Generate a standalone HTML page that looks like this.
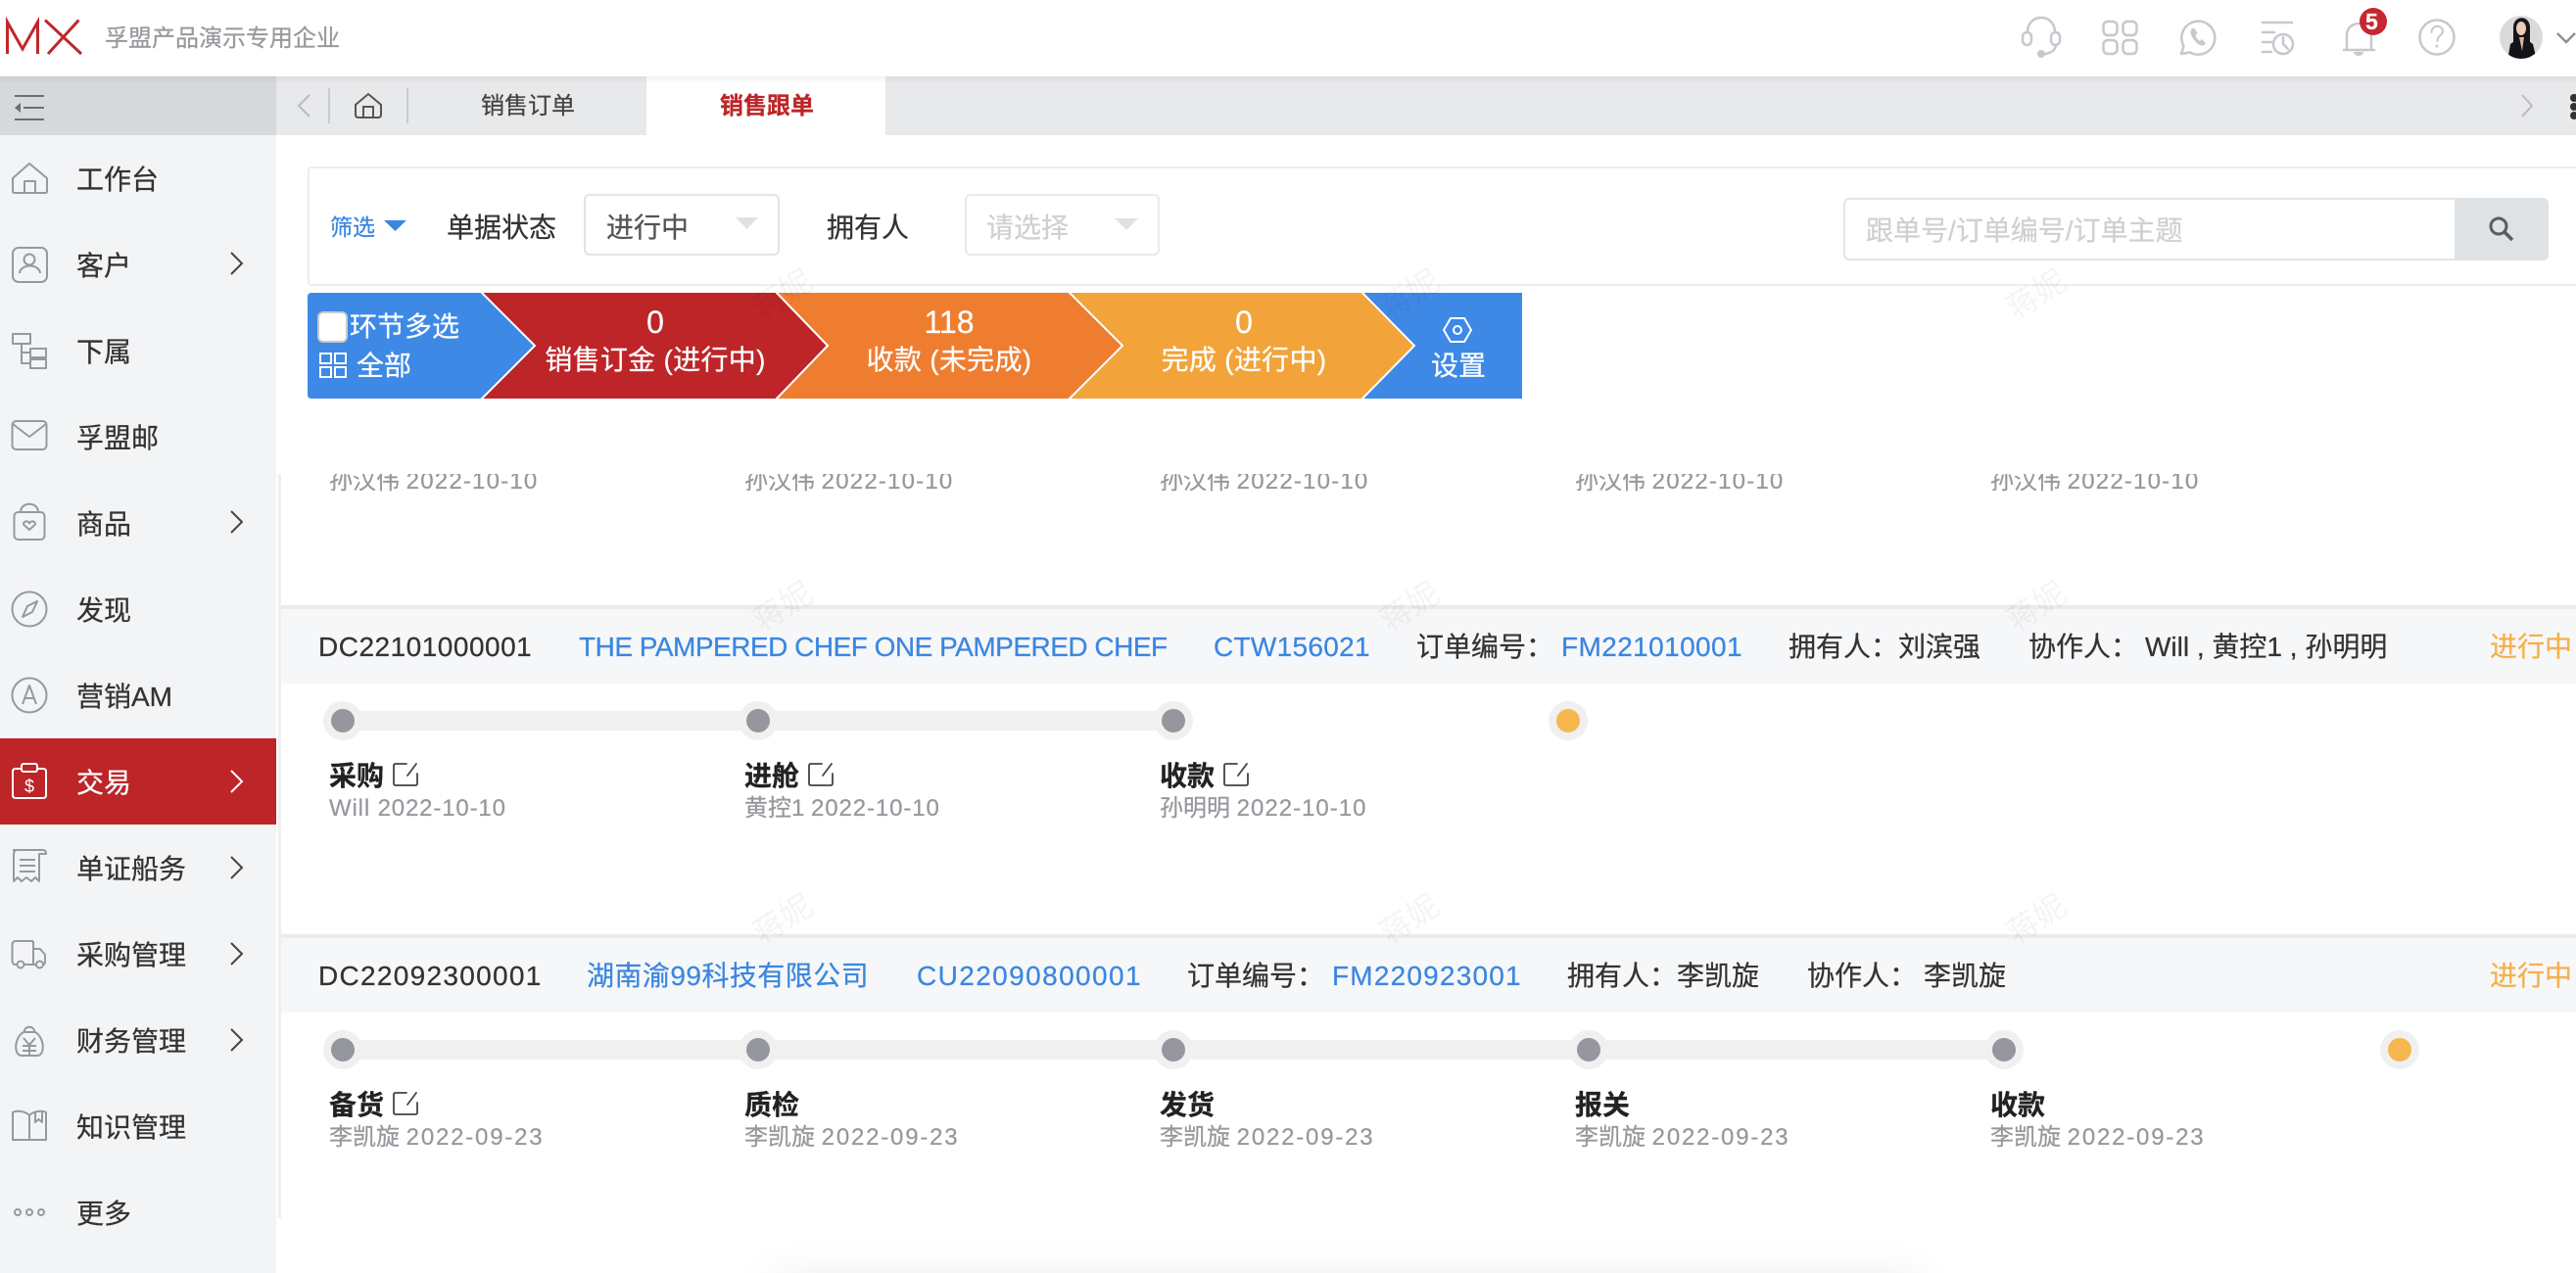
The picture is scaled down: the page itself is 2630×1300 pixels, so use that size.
<!DOCTYPE html>
<html lang="zh-CN"><head><meta charset="utf-8"><title>销售跟单</title>
<style>
html,body{margin:0;padding:0;width:2630px;height:1300px;overflow:hidden;background:#fff}
body{position:relative;font-family:"Liberation Sans","Noto Sans CJK SC",sans-serif;color:#333}
.b{position:absolute}
.t{position:absolute;white-space:nowrap;line-height:40px;height:40px;font-size:28px;z-index:5;-webkit-text-stroke:.25px currentColor}
.s{font-size:24px;color:#97989d}
.h{font-weight:700;color:#222}
.c{transform:translateX(-50%);color:#fff}
.bl{color:#3b87e0}
.o{color:#f5b04c}
.wm{position:absolute;font-size:32px;color:rgba(0,0,0,.045);transform:translate(-50%,-50%) rotate(-32deg);z-index:6;white-space:nowrap}
svg{position:absolute;left:0;top:0;z-index:4}
</style></head><body>
<!-- backgrounds -->
<div class="b" style="left:0;top:138px;width:282px;height:1162px;background:#f3f4f6"></div>
<div class="b" style="left:0;top:78px;width:282px;height:60px;background:#d6d8da"></div>
<div class="b" style="left:282px;top:78px;width:2348px;height:60px;background:#e8e9eb"></div>
<div class="b" style="left:660px;top:78px;width:244px;height:60px;background:#fff"></div>
<div class="b" style="left:0;top:78px;width:2630px;height:8px;background:linear-gradient(rgba(0,0,0,.05),rgba(0,0,0,0))"></div>
<div class="b" style="left:0;top:754px;width:282px;height:88px;background:#bd2528"></div>
<div class="b" style="left:284px;top:484px;width:3px;height:760px;background:#efefef"></div>
<div class="b" style="left:314px;top:170px;width:2330px;height:118px;border:2px solid #eceded;border-radius:4px"></div>
<div class="b" style="left:287px;top:618px;width:2343px;height:4px;background:#ebebec"></div>
<div class="b" style="left:287px;top:622px;width:2343px;height:76px;background:#f6f7f9"></div>
<div class="b" style="left:287px;top:954px;width:2343px;height:4px;background:#ebebec"></div>
<div class="b" style="left:287px;top:958px;width:2343px;height:76px;background:#f6f7f9"></div>
<div class="b" style="left:596px;top:198px;width:196px;height:59px;border:2px solid #e2e4e6;border-radius:6px"></div>
<div class="b" style="left:985px;top:198px;width:195px;height:59px;border:2px solid #e8eaeb;border-radius:6px"></div>
<div class="b" style="left:1882px;top:202px;height:60px;border:2px solid #e4e5e7;border-radius:6px;box-sizing:content-box;width:716px"></div>
<div class="b" style="left:2506px;top:202px;width:96px;height:64px;background:#dfe2e5;border-radius:0 6px 6px 0"></div>
<div class="b" style="left:800px;top:1316px;width:1150px;height:20px;box-shadow:0 0 44px 12px rgba(0,0,0,.08)"></div>
<!-- bars -->
<div class="b" style="left:350px;top:726px;width:848px;height:20px;background:#f0f0f0"></div>
<div class="b" style="left:350px;top:1062px;width:1696px;height:20px;background:#f0f0f0"></div>

<svg width="2630" height="1300" viewBox="0 0 2630 1300" fill="none">
<!-- logo -->
<path d="M7.500 55V22.500L23 50 38.500 22.500V55M46 20.500 83 55M80.500 20.500 49 55" stroke="#c0272d" stroke-width="3"/>
<!-- header icons -->
<g stroke="#c6c8cd" stroke-width="2.500" stroke-linecap="round" stroke-linejoin="round">
<path d="M2070 33C2070 13 2098 13 2098 33"/>
<rect x="2065" y="33" width="9" height="13" rx="4.500"/><rect x="2094" y="33" width="9" height="13" rx="4.500"/>
<path d="M2099 46C2098 52 2094 54 2088 55"/>
<rect x="2147.500" y="22" width="14" height="14" rx="4.500"/><rect x="2167.500" y="22" width="14" height="14" rx="4.500"/>
<rect x="2147.500" y="41" width="14" height="14" rx="4.500"/><rect x="2167.500" y="41" width="14" height="14" rx="4.500"/>
<path d="M2227 55L2229.500 47A17 17 0 1 1 2236 53.500Z"/>
<path d="M2310 23H2340M2310 33H2322M2310 43H2319M2310 53H2319"/>
<circle cx="2331" cy="45" r="10"/><path d="M2331 38V45L2336 50"/>
<path d="M2393 51H2424M2396 51V36C2396 20 2421 20 2421 36V51"/>
<circle cx="2488" cy="38" r="17.500"/>
<path d="M2482.500 33C2482.500 25 2494 25 2494 32C2494 36 2488.500 36 2488.500 42" stroke-width="2"/>
</g>
<circle cx="2084" cy="55" r="4" fill="#c6c8cd"/>
<path d="M2238 29C2236 31 2236 35 2239 39C2242 44 2246 47 2250 46.500L2252 44L2248 40L2246 42C2244 41 2242 38 2241.500 36L2243.500 34L2240.500 29Z" fill="#c6c8cd"/>
<path d="M2403 53h10a5 4 0 0 1-10 0Z" fill="#c6c8cd"/>
<circle cx="2488" cy="47" r="1.500" fill="#c6c8cd"/>
<circle cx="2423" cy="22" r="14" fill="#c6282f"/>
<path d="M2611 34L2620 43 2629 34" stroke="#8d9196" stroke-width="2.500"/>
<!-- avatar -->
<clipPath id="av"><circle cx="2574" cy="38" r="22"/></clipPath>
<g clip-path="url(#av)"><rect x="2550" y="14" width="48" height="48" fill="#dbd9d9"/>
<path d="M2566 45V28C2566 15 2583 15 2583 28V45Z" fill="#17161a"/>
<ellipse cx="2574" cy="29" rx="5" ry="7" fill="#ecc9b8"/>
<path d="M2560 62L2563 45 2570 40H2579L2586 45 2590 62Z" fill="#141317"/>
<path d="M2572 38H2577L2575 52Z" fill="#d9b3a4"/></g>
<!-- tabs bar -->
<g stroke-width="2">
<path d="M316 97L305 108 316 119" stroke="#b9bbbe"/>
<path d="M336 90V126M416 90V126" stroke="#c9cbce"/>
<path d="M363 107L376 96 389 107V117Q389 120 386 120H366Q363 120 363 117ZM371 120V109H381V120" stroke="#555"/>
<path d="M2575 97L2585 108 2575 119" stroke="#b9bbbe"/>
</g>
<g fill="#333"><circle cx="2628" cy="100" r="4"/><circle cx="2628" cy="109" r="4"/><circle cx="2628" cy="118" r="4"/></g>
<path d="M15 98H45M24 110H45M15 122H45" stroke="#6b6e72" stroke-width="2"/>
<path d="M15 110L21 105V115Z" fill="#6b6e72"/>
<!-- sidebar icons -->
<g stroke="#96999d" stroke-width="2" stroke-linejoin="round">
<path d="M13 182L30 167 48 182V195Q48 197 46 197H15Q13 197 13 195ZM25 197V185H36V197"/>
<rect x="13" y="253" width="35" height="35" rx="6"/><circle cx="30" cy="265" r="5.500"/><path d="M20 279C21 269 40 269 41 279"/>
<rect x="13" y="341" width="18" height="10"/><path d="M22 351V371H31M22 360H31"/><rect x="31" y="356" width="16" height="9"/><rect x="31" y="367" width="16" height="9"/>
<rect x="12.500" y="430" width="35" height="29" rx="4"/><path d="M13 433L30 446 47 433"/>
<rect x="14.500" y="523" width="31" height="28" rx="4"/><path d="M21 523C21 512 39 512 39 523"/><path d="M30 541L24 535.500C24 531.500 29 531.500 30 534.500C31 531.500 36 531.500 36 535.500Z"/>
<circle cx="30" cy="622" r="17.500"/><path d="M23 630L28 619 38 614 33 625Z"/>
<circle cx="30" cy="710" r="17.500"/><path d="M23 719L30 700 37 719M25 713H35"/>
<path d="M13 868H44Q47 868 47 872H40V900L36 896 32 900 27 896 22 900 18 896 14 900V872Q14 868 18 868M20 878H36M20 884H36M20 890H36"/>
<path d="M34 961H16Q12.500 961 12.500 965V981Q12.500 985 16 985H18M34 961V985H25M34 969H41L46 975V982Q46 985 44 985H43.500M34 985H37"/>
<circle cx="21" cy="985" r="3.500"/><circle cx="40.500" cy="985" r="3.500"/>
<path d="M24 1054C14 1060 14 1078 22 1078H38C46 1078 46 1060 36 1054ZM25 1054C24 1047 36 1047 35 1054M24 1060L30 1067 36 1060M23 1068H37M23 1073H37M30 1066V1077"/>
<path d="M30 1139C25 1134 16 1134 13 1136V1164H30M30 1139C35 1134 44 1134 47 1136V1164H30V1139ZM36 1135V1146L39.500 1143 43 1146V1135"/>
<circle cx="18" cy="1238" r="3"/><circle cx="30" cy="1238" r="3"/><circle cx="42" cy="1238" r="3"/>
</g>
<g fill="none" stroke="#fff" stroke-width="2" stroke-linejoin="round">
<path d="M22 785H16Q13 785 13 788V812Q13 815 16 815H44Q47 815 47 812V788Q47 785 44 785H38"/>
<rect x="22" y="780" width="16" height="8" rx="2"/>
</g>
<text x="30" y="809" text-anchor="middle" font-size="18" fill="#fff" font-family="Liberation Sans, sans-serif">$</text>
<!-- sidebar arrows -->
<g stroke="#444" stroke-width="2">
<path d="M236 258L247 269 236 280M236 522L247 533 236 544M236 875L247 886 236 897M236 963L247 974 236 985M236 1051L247 1062 236 1073"/>
</g>
<path d="M236 787L247 798 236 809" stroke="#fff" stroke-width="2"/>
<!-- filter triangles -->
<path d="M392 225H415L403.500 236Z" fill="#3b87e0"/>
<path d="M751 222H774L762.500 234Z" fill="#dfe2e5"/>
<path d="M1138 223H1162L1150 235Z" fill="#dfe2e5"/>
<!-- search -->
<circle cx="2551" cy="231" r="8" stroke="#585b60" stroke-width="3"/><path d="M2557 237L2565 245" stroke="#585b60" stroke-width="3.500"/>
<!-- flow -->
<rect x="1380" y="299" width="174" height="108" fill="#3e89e6"/>
<path d="M1080 299H1390L1443 353 1390 407H1080Z" fill="#f2a43b"/>
<path d="M1390 298L1444 353 1390 408" stroke="#fff" stroke-width="2"/>
<path d="M780 299H1091L1145 353 1091 407H780Z" fill="#ef7d30"/>
<path d="M1091 298L1146 353 1091 408" stroke="#fff" stroke-width="2"/>
<path d="M480 299H792L844 353 792 407H480Z" fill="#bd2528"/>
<path d="M792 298L845 353 792 408" stroke="#fff" stroke-width="2"/>
<path d="M318 299H491L545 353 491 407H318Q314 407 314 403V303Q314 299 318 299Z" fill="#3e89e6"/>
<path d="M490 297L546 353 490 409" stroke="#fff" stroke-width="2"/>
<rect x="325" y="319" width="29" height="30" rx="5" fill="#fff" stroke="#c9cbd0" stroke-width="2"/>
<g stroke="#fff" stroke-width="2"><rect x="327" y="361" width="11" height="10"/><rect x="342" y="361" width="11" height="10"/><rect x="327" y="375" width="11" height="10"/><rect x="342" y="375" width="11" height="10"/>
<path d="M1481 325H1495L1502 337 1495 349H1481L1474 337Z"/><circle cx="1488" cy="337" r="4"/></g>
<!-- track dots -->
<g id="dots">
<g fill="#f0f0f0"><circle cx="350" cy="736" r="20"/><circle cx="774" cy="736" r="20"/><circle cx="1198" cy="736" r="20"/><circle cx="1601" cy="736" r="20"/>
<circle cx="350" cy="1072" r="20"/><circle cx="774" cy="1072" r="20"/><circle cx="1198" cy="1072" r="20"/><circle cx="1622" cy="1072" r="20"/><circle cx="2046" cy="1072" r="20"/><circle cx="2450" cy="1072" r="20"/></g>
<g fill="#95969e"><circle cx="350" cy="736" r="12"/><circle cx="774" cy="736" r="12"/><circle cx="1198" cy="736" r="12"/>
<circle cx="350" cy="1072" r="12"/><circle cx="774" cy="1072" r="12"/><circle cx="1198" cy="1072" r="12"/><circle cx="1622" cy="1072" r="12"/><circle cx="2046" cy="1072" r="12"/></g>
<g fill="#f4b84e"><circle cx="1601" cy="736" r="12"/><circle cx="2450" cy="1072" r="12"/></g>
</g>
<!-- edit icons -->
<g stroke="#444" stroke-width="1.800" stroke-linecap="round">
<path d="M415 780H404Q402 780 402 782V800Q402 802 404 802H424Q426 802 426 800V790M425 780L416 792"/>
<path d="M839 780H828Q826 780 826 782V800Q826 802 828 802H848Q850 802 850 800V790M849 780L840 792"/>
<path d="M1263 780H1252Q1250 780 1250 782V800Q1250 802 1252 802H1272Q1274 802 1274 800V790M1273 780L1264 792"/>
<path d="M415 1116H404Q402 1116 402 1118V1136Q402 1138 404 1138H424Q426 1138 426 1136V1126M425 1116L416 1128"/>
</g>
</svg>

<!-- header text -->
<div class="t" style="left:107px;top:20px;font-size:24px;color:#97999d">孚盟产品演示专用企业</div>
<div class="t" style="left:2415px;top:2px;font-size:23px;font-weight:700;color:#fff">5</div>
<div class="t" style="left:491px;top:89px;font-size:24px;color:#444">销售订单</div>
<div class="t" style="left:735px;top:89px;font-size:24px;font-weight:700;color:#bd2528">销售跟单</div>
<!-- sidebar text -->
<div class="t" style="left:78px;top:164px">工作台</div>
<div class="t" style="left:78px;top:252px">客户</div>
<div class="t" style="left:78px;top:340px">下属</div>
<div class="t" style="left:78px;top:428px">孚盟邮</div>
<div class="t" style="left:78px;top:516px">商品</div>
<div class="t" style="left:78px;top:604px">发现</div>
<div class="t" style="left:78px;top:692px">营销AM</div>
<div class="t" style="left:78px;top:780px;color:#fff">交易</div>
<div class="t" style="left:78px;top:868px">单证船务</div>
<div class="t" style="left:78px;top:956px">采购管理</div>
<div class="t" style="left:78px;top:1044px">财务管理</div>
<div class="t" style="left:78px;top:1132px">知识管理</div>
<div class="t" style="left:78px;top:1220px">更多</div>
<!-- filter -->
<div class="t bl" style="left:337px;top:212px;font-size:23px">筛选</div>
<div class="t" style="left:456px;top:213px">单据状态</div>
<div class="t" style="left:619px;top:213px;color:#555">进行中</div>
<div class="t" style="left:844px;top:213px">拥有人</div>
<div class="t" style="left:1007px;top:213px;color:#cfd0d2">请选择</div>
<div class="t" style="left:1905px;top:216px;color:#cfd0d2">跟单号/订单编号/订单主题</div>
<!-- flow text -->
<div class="t" style="left:357px;top:314px;color:#fff">环节多选</div>
<div class="t" style="left:364px;top:354px;color:#fff">全部</div>
<div class="t c" style="left:669px;top:309px;font-size:32px">0</div>
<div class="t c" style="left:669px;top:348px;letter-spacing:.3px">销售订金 (进行中)</div>
<div class="t c" style="left:969px;top:309px;font-size:32px">118</div>
<div class="t c" style="left:969px;top:348px;letter-spacing:.3px">收款 (未完成)</div>
<div class="t c" style="left:1270px;top:309px;font-size:32px">0</div>
<div class="t c" style="left:1270px;top:348px;letter-spacing:.3px">完成 (进行中)</div>
<div class="t c" style="left:1489px;top:354px">设置</div>
<!-- clipped row -->
<div class="b" style="left:287px;top:484px;width:2343px;height:30px;overflow:hidden;z-index:5">
<div class="t s" style="left:49px;top:-12px">孙汉伟 <span style="letter-spacing:1.2px">2022-10-10</span></div>
<div class="t s" style="left:473px;top:-12px">孙汉伟 <span style="letter-spacing:1.2px">2022-10-10</span></div>
<div class="t s" style="left:897px;top:-12px">孙汉伟 <span style="letter-spacing:1.2px">2022-10-10</span></div>
<div class="t s" style="left:1321px;top:-12px">孙汉伟 <span style="letter-spacing:1.2px">2022-10-10</span></div>
<div class="t s" style="left:1745px;top:-12px">孙汉伟 <span style="letter-spacing:1.2px">2022-10-10</span></div>
</div>
<!-- row 1 -->
<div class="t" style="left:325px;top:641px;letter-spacing:.5px">DC22101000001</div>
<div class="t bl" style="left:591px;top:641px;letter-spacing:-.5px">THE PAMPERED CHEF ONE PAMPERED CHEF</div>
<div class="t bl" style="left:1239px;top:641px;letter-spacing:.3px">CTW156021</div>
<div class="t" style="left:1446px;top:641px">订单编号：</div>
<div class="t bl" style="left:1594px;top:641px;letter-spacing:.4px">FM221010001</div>
<div class="t" style="left:1826px;top:641px">拥有人：</div>
<div class="t" style="left:1938px;top:641px">刘滨强</div>
<div class="t" style="left:2071px;top:641px">协作人：</div>
<div class="t" style="left:2190px;top:641px">Will , 黄控1 , 孙明明</div>
<div class="t o" style="left:2542px;top:641px">进行中</div>
<div class="t h" style="left:336px;top:773px">采购</div>
<div class="t h" style="left:760px;top:773px">进舱</div>
<div class="t h" style="left:1184px;top:773px">收款</div>
<div class="t s" style="left:336px;top:806px;letter-spacing:.85px">Will 2022-10-10</div>
<div class="t s" style="left:760px;top:806px">黄控1 <span style="letter-spacing:.9px">2022-10-10</span></div>
<div class="t s" style="left:1184px;top:806px">孙明明 <span style="letter-spacing:1px">2022-10-10</span></div>
<!-- row 2 -->
<div class="t" style="left:325px;top:977px;letter-spacing:1.3px">DC22092300001</div>
<div class="t bl" style="left:599px;top:977px;letter-spacing:.45px">湖南渝99科技有限公司</div>
<div class="t bl" style="left:936px;top:977px;letter-spacing:1.4px">CU22090800001</div>
<div class="t" style="left:1212px;top:977px">订单编号：</div>
<div class="t bl" style="left:1360px;top:977px;letter-spacing:1.2px">FM220923001</div>
<div class="t" style="left:1600px;top:977px">拥有人：</div>
<div class="t" style="left:1712px;top:977px">李凯旋</div>
<div class="t" style="left:1845px;top:977px">协作人：</div>
<div class="t" style="left:1964px;top:977px">李凯旋</div>
<div class="t o" style="left:2542px;top:977px">进行中</div>
<div class="t h" style="left:336px;top:1109px">备货</div>
<div class="t h" style="left:760px;top:1109px">质检</div>
<div class="t h" style="left:1184px;top:1109px">发货</div>
<div class="t h" style="left:1608px;top:1109px">报关</div>
<div class="t h" style="left:2032px;top:1109px">收款</div>
<div class="t s" style="left:336px;top:1142px">李凯旋 <span style="letter-spacing:1.8px">2022-09-23</span></div>
<div class="t s" style="left:760px;top:1142px">李凯旋 <span style="letter-spacing:1.8px">2022-09-23</span></div>
<div class="t s" style="left:1184px;top:1142px">李凯旋 <span style="letter-spacing:1.8px">2022-09-23</span></div>
<div class="t s" style="left:1608px;top:1142px">李凯旋 <span style="letter-spacing:1.8px">2022-09-23</span></div>
<div class="t s" style="left:2032px;top:1142px">李凯旋 <span style="letter-spacing:1.8px">2022-09-23</span></div>
<!-- watermarks -->
<div class="wm" style="left:798px;top:299px">蒋妮</div>
<div class="wm" style="left:1438px;top:299px">蒋妮</div>
<div class="wm" style="left:2078px;top:299px">蒋妮</div>
<div class="wm" style="left:798px;top:618px">蒋妮</div>
<div class="wm" style="left:1438px;top:618px">蒋妮</div>
<div class="wm" style="left:2078px;top:618px">蒋妮</div>
<div class="wm" style="left:798px;top:937px">蒋妮</div>
<div class="wm" style="left:1438px;top:937px">蒋妮</div>
<div class="wm" style="left:2078px;top:937px">蒋妮</div>
</body></html>
